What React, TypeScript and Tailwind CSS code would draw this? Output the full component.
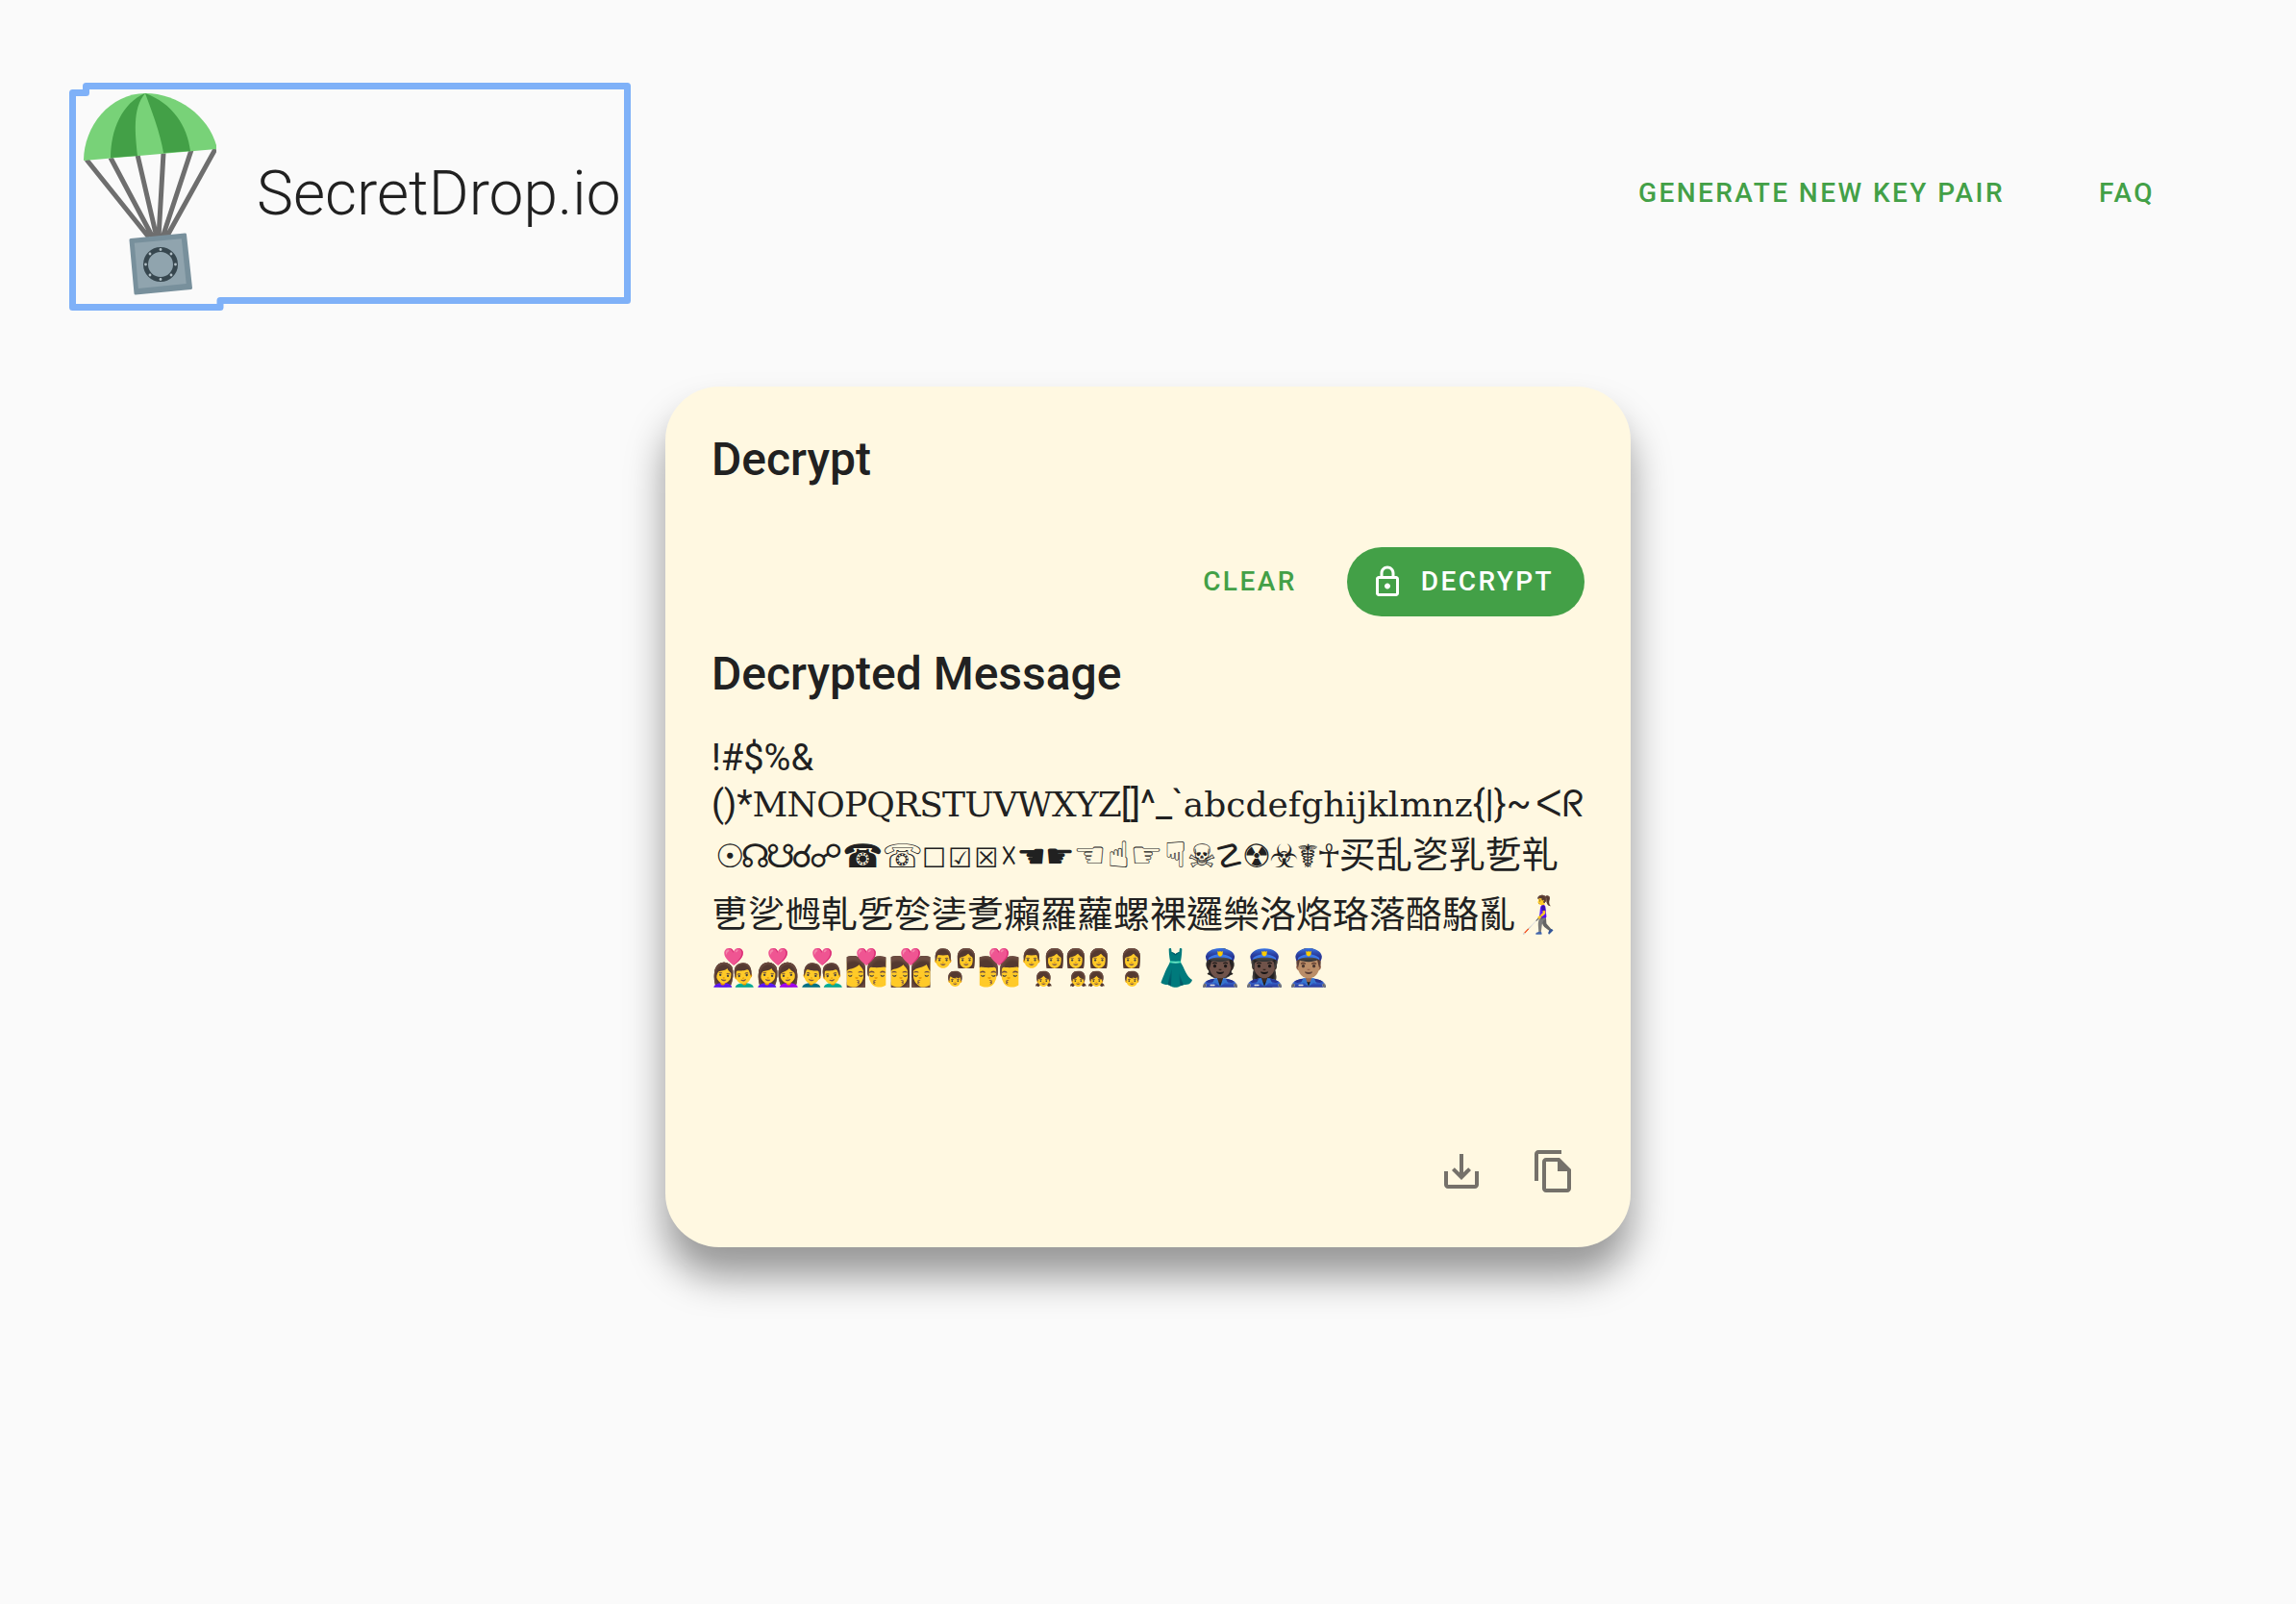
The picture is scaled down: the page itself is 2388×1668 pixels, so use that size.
const green = "text-[#43a047] text-[28px] font-medium tracking-[2.45px]";
const slab = "text-[36px] font-['DejaVu_Serif',serif]";

const Lock = () => (
  <svg viewBox="0 0 24 24" className="w-[36px] h-[36px] shrink-0" fill="#fff">
    <path d="M18 8h-1V6c0-2.76-2.24-5-5-5S7 3.24 7 6v2H6c-1.1 0-2 .9-2 2v10c0 1.1.9 2 2 2h12c1.1 0 2-.9 2-2V10c0-1.1-.9-2-2-2zM9 6c0-1.66 1.34-3 3-3s3 1.34 3 3v2H9V6zm9 14H6V10h12v10zm-6-3c1.1 0 2-.9 2-2s-.9-2-2-2-2 .9-2 2 .9 2 2 2z" />
  </svg>
);

const Parachute = () => (
  <svg viewBox="0 0 146 223" className="w-[146px] h-[223px] shrink-0 self-start mt-[7px] ml-[7px]">
    <g stroke="#6e6e6e" strokeWidth="5" fill="none">
      <path d="M11 73 L76 154 M36 71 L80 154 M64 68 L84 154 M91 66 L86 154 M120 63 L90 154 M145 62 L94 154" />
    </g>
    <path d="M8 74 C8 38 36 4 72 4 C108 4 140 30 147 62 Z" fill="#78d278" />
    <path d="M36 71 C36 42 48 14 72 4 C58 20 62 48 64 69 Z M72 4 C100 14 116 38 119 64 L91 66 C88 46 78 20 72 4 Z" fill="#43a047" />
    <path d="M57 156.5 L113.5 151 L119.5 206.5 L62 212 Z" fill="#78909c" stroke="#78909c" strokeWidth="3" strokeLinejoin="round" />
    <path d="M60.8 159.7 L109.8 155.3 L114.7 202 L64.9 207 Z" fill="#90a4ae" />
    <circle cx="88" cy="182" r="15.5" fill="none" stroke="#37474f" strokeWidth="5" />
    <g fill="#b0bec5">
      <circle cx="88" cy="166.5" r="1.4" />
      <circle cx="99" cy="171" r="1.4" />
      <circle cx="103.5" cy="182" r="1.4" />
      <circle cx="99" cy="193" r="1.4" />
      <circle cx="88" cy="197.5" r="1.4" />
      <circle cx="77" cy="193" r="1.4" />
      <circle cx="72.5" cy="182" r="1.4" />
      <circle cx="77" cy="171" r="1.4" />
    </g>
  </svg>
);

const FocusRing = () => (
  <svg viewBox="0 0 584 237" className="absolute left-0 top-0 w-[584px] h-[237px]" fill="none">
    <path d="M3.5 10.5 H17.5 V3.5 H580.5 V226.5 H157 V233.5 H3.5 Z" stroke="#7fb1f8" strokeWidth="7" strokeLinejoin="round" />
  </svg>
);

// family emoji render as silhouettes here, so stack the people instead
const Family = ({ adults, kids }: { adults: string[]; kids: string[] }) => (
  <span className="inline-flex flex-col items-center w-[46px] h-[44px] mt-[6px] align-top">
    <span className="flex text-[19px] leading-[25px]">
      {adults.map((a, i) => (
        <span key={i}>{a}</span>
      ))}
    </span>
    <span className="flex text-[15px] leading-[19px]">
      {kids.map((k, i) => (
        <span key={i}>{k}</span>
      ))}
    </span>
  </span>
);

export default function App() {
  return (
    <div className="min-h-screen bg-[#fafafa] font-['Roboto',sans-serif] text-[#212121]">
      <header className="flex items-center justify-between pl-[72px] pr-[147px] pt-[86px]">
        <div className="relative flex items-center w-[584px] h-[230px]">
          <FocusRing />
          <Parachute />
          <span className="text-[64px] font-light ml-[42px] mt-[2px]">SecretDrop.io</span>
        </div>
        <nav className={`flex gap-[98px] ${green}`}>
          <span>GENERATE NEW KEY PAIR</span>
          <span>FAQ</span>
        </nav>
      </header>
      <main className="flex justify-center mt-[86px]">
        <div className="w-[1004px] h-[895px] rounded-[56px] bg-[#fff8e1] pt-[40px] px-[48px] pb-[55px] shadow-[0_30px_40px_rgba(0,0,0,0.4)] flex flex-col">
          <h2 className="text-[48px] font-medium leading-[72px]">Decrypt</h2>
          <div className="flex justify-end items-center gap-[52px] mt-[55px]">
            <span className={green}>CLEAR</span>
            <div className="flex items-center gap-[17px] h-[72px] pl-[24px] pr-[32px] rounded-full bg-[#43a047] text-white text-[28px] font-medium tracking-[2.4px]">
              <Lock />
              DECRYPT
            </div>
          </div>
          <h2 className="text-[48px] font-medium leading-[72px] mt-[24px]">Decrypted Message</h2>
          <div className="mt-[26px] text-[38px] whitespace-nowrap">
            <div className="leading-[50px]">!#$%&amp;</div>
            <div className="leading-[47px]">
              ()*
              <span className={`${slab} tracking-[-0.85px]`}>MNOPQRSTUVWXYZ</span>
              []^_`
              <span className={`${slab} tracking-[0px]`}>abcdefghijklmnz</span>
              {"{|}"}~<span className="ml-[4px]">ᐸᖇ</span>
            </div>
            <div className="leading-[52px]">
              <span className="font-['DejaVu_Sans',sans-serif]">
                <span className="text-[34px] tracking-[-4px] ml-[4px]">☉☊☋☌☍</span>
                <span className="text-[34px] tracking-[-1px] ml-[4px]">☎☏</span>
                <span className="text-[28px] tracking-[2px]">☐☑☒</span>
                <span className="text-[34px] tracking-[-1px]">☓☚☛</span>
                <span className="text-[38px] tracking-[1px]">☜☝☞☟</span>
                <span className="text-[34px] tracking-[-2px]">☠☡☢☣☤☥</span>
              </span>
              <span className="font-['Noto_Sans_CJK_TC',sans-serif]">买乱乲乳乴乵</span>
            </div>
            <div className="leading-[57px] font-['Noto_Sans_CJK_TC',sans-serif]">
              乶乷乸乹乺乻乼乽癩羅蘿螺裸邏樂洛烙珞落酪駱亂
              <span>👩‍🦯</span>
            </div>
            <div className="leading-[54px] text-[37px] font-['Noto_Sans_CJK_TC',sans-serif]">
              👩‍❤️‍👨👩‍❤️‍👩👨‍❤️‍👨👩‍❤️‍💋‍👨👩‍❤️‍💋‍👩
              <Family adults={["👨", "👩"]} kids={["👦"]} />
              👨‍❤️‍💋‍👨
              <Family adults={["👨", "👩"]} kids={["👧"]} />
              <Family adults={["👩", "👩"]} kids={["👧", "👧"]} />
              <Family adults={["👩"]} kids={["👦"]} />
              <span className="hue-rotate-[-40deg] inline-block">👗</span>👮🏿👮🏿‍♀️👮🏽‍♂️
            </div>
          </div>
          <div className="mt-auto flex justify-end items-center gap-[48px] pr-[8px]">
            <svg viewBox="0 0 24 24" className="w-[48px] h-[48px]" fill="#75716a">
              <path d="M19 12v7H5v-7H3v7c0 1.1.9 2 2 2h14c1.1 0 2-.9 2-2v-7h-2zm-6 .67l2.59-2.58L17 11.5l-5 5-5-5 1.41-1.41L11 12.67V3h2z" />
            </svg>
            <svg viewBox="0 0 24 24" className="w-[48px] h-[48px]" fill="#75716a">
              <path d="M16 1H4c-1.1 0-2 .9-2 2v14h2V3h12V1zm-1 4H8c-1.1 0-1.99.9-1.99 2L6 21c0 1.1.89 2 1.99 2H19c1.1 0 2-.9 2-2V11l-6-6zM8 21V7h6v5h5v9H8z" />
            </svg>
          </div>
        </div>
      </main>
    </div>
  );
}
